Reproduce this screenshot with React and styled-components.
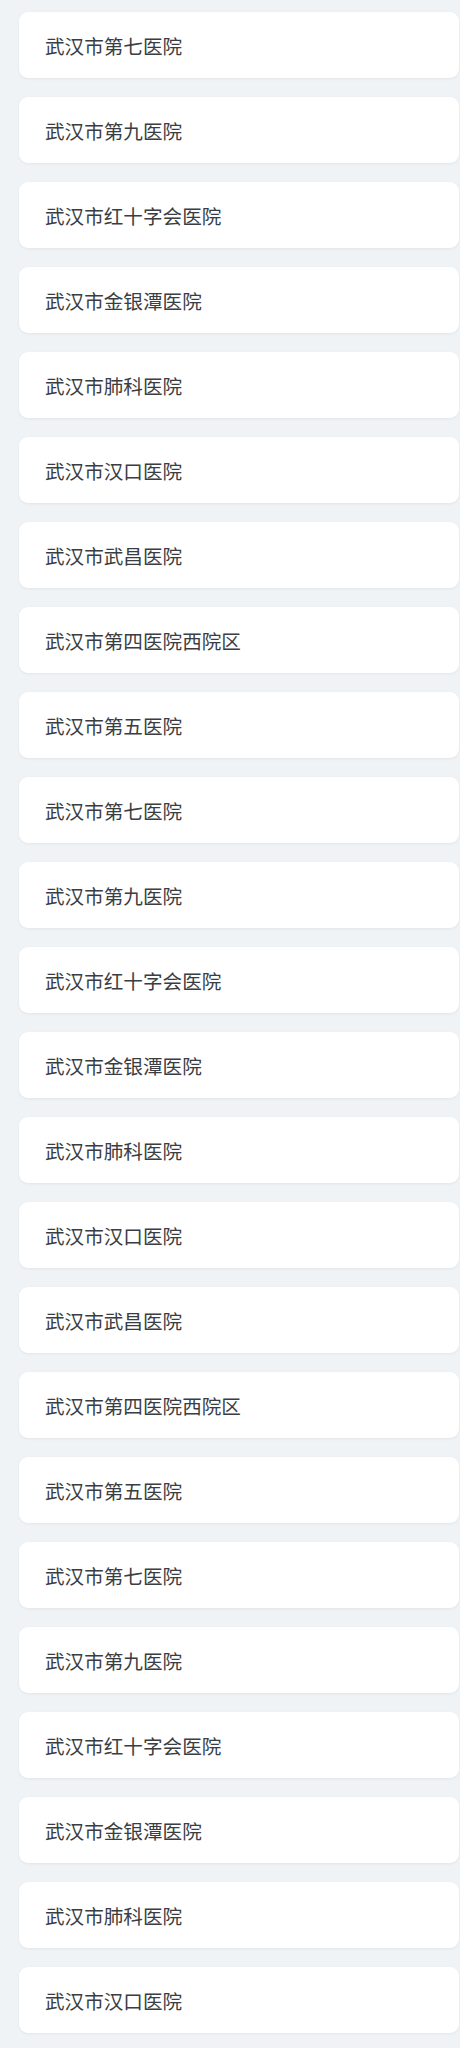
import React from 'react';
import styled, { createGlobalStyle } from 'styled-components';

const GlobalStyle = createGlobalStyle`
  body {
    margin: 0;
    background: #eff3f6;
    font-family: "Noto Sans CJK SC", "Noto Sans", sans-serif;
  }
`;

const List = styled.div`
  display: flex;
  flex-direction: column;
  gap: 19px;
  padding: 12px 1px 20px 19px;
`;

const Card = styled.div`
  display: flex;
  align-items: center;
  height: 66px;
  padding-left: 26px;
  background: #ffffff;
  border-radius: 9px;
  box-shadow: 0 1px 3px rgba(0, 0, 0, 0.06);
  box-sizing: border-box;
`;

const Name = styled.span`
  font-size: 19.6px;
  color: #3a3d42;
  letter-spacing: 0;
`;

const hospitals = [
  '武汉市第七医院',
  '武汉市第九医院',
  '武汉市红十字会医院',
  '武汉市金银潭医院',
  '武汉市肺科医院',
  '武汉市汉口医院',
  '武汉市武昌医院',
  '武汉市第四医院西院区',
  '武汉市第五医院',
];

const items = [...hospitals, ...hospitals, ...hospitals].slice(0, 24);

export default function App() {
  return (
    <>
      <GlobalStyle />
      <List>
        {items.map((name, i) => (
          <Card key={i}>
            <Name>{name}</Name>
          </Card>
        ))}
      </List>
    </>
  );
}
